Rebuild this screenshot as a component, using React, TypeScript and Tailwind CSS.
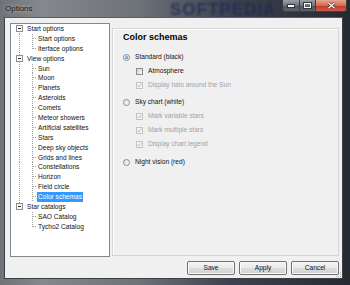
import React from "react";

type Row = {
  text: string;
  level: 0 | 1;
  first?: boolean;
  lastTop?: boolean;
  lastChild?: boolean;
  parentLast?: boolean;
  selected?: boolean;
};

const rows: Row[] = [
  { text: "Start options", level: 0, first: true },
  { text: "Start options", level: 1 },
  { text: "Iterface options", level: 1, lastChild: true },
  { text: "View options", level: 0 },
  { text: "Sun", level: 1 },
  { text: "Moon", level: 1 },
  { text: "Planets", level: 1 },
  { text: "Asteroids", level: 1 },
  { text: "Comets", level: 1 },
  { text: "Meteor showers", level: 1 },
  { text: "Artificial satellites", level: 1 },
  { text: "Stars", level: 1 },
  { text: "Deep sky objects", level: 1 },
  { text: "Grids and lines", level: 1 },
  { text: "Constellations", level: 1 },
  { text: "Horizon", level: 1 },
  { text: "Field circle", level: 1 },
  { text: "Color schemas", level: 1, selected: true },
  { text: "Star catalogs", level: 0, lastTop: true },
  { text: "SAO Catalog", level: 1, parentLast: true },
  { text: "Tycho2 Catalog", level: 1, parentLast: true, lastChild: true },
];

const H = 9.9;
const LINE = "#a0a0a0";

function Connector({ r }: { r: Row }) {
  const c = H / 2;
  if (r.level === 0) {
    const y1 = r.first ? c : 0;
    const y2 = r.lastTop ? c : H;
    return (
      <svg width={15} height={H} className="shrink-0" shapeRendering="crispEdges">
        <line x1={8.5} x2={8.5} y1={y1} y2={y2} stroke={LINE} strokeDasharray="1 1" />
        <rect x={5.5} y={Math.round(c) - 3.5} width={6} height={6} fill="#f7f7f7" stroke="#8f9094" />
        <line x1={7} x2={10} y1={Math.round(c) - 0.5} y2={Math.round(c) - 0.5} stroke="#333" />
      </svg>
    );
  }
  return (
    <svg width={26} height={H} className="shrink-0" shapeRendering="crispEdges">
      {!r.parentLast && (
        <line x1={8.5} x2={8.5} y1={0} y2={H} stroke={LINE} strokeDasharray="1 1" />
      )}
      <line x1={21.5} x2={21.5} y1={0} y2={r.lastChild ? c : H} stroke={LINE} strokeDasharray="1 1" />
      <line x1={22} x2={26} y1={Math.round(c) - 0.5} y2={Math.round(c) - 0.5} stroke={LINE} strokeDasharray="1 1" />
    </svg>
  );
}

function Radio({ checked }: { checked?: boolean }) {
  return (
    <div className="w-[7px] h-[7px] rounded-full border border-[#8a8d91] bg-[linear-gradient(135deg,#dedede,#fbfbfb)] flex items-center justify-center shrink-0">
      {checked && (
        <div className="w-[3px] h-[3px] rounded-full bg-[radial-gradient(circle_at_35%_35%,#9fd0ff,#1d64b8)]" />
      )}
    </div>
  );
}

function Check({ disabled, checked }: { disabled?: boolean; checked?: boolean }) {
  return (
    <div
      className={
        disabled
          ? "w-[7px] h-[7px] border border-[#c2c4c6] bg-[#f4f4f4] flex items-center justify-center shrink-0"
          : "w-[7px] h-[7px] border border-[#8a8d91] bg-[linear-gradient(135deg,#d4d4d4,#f7f7f7)] shrink-0"
      }
    >
      {checked && (
        <svg width={5} height={5} viewBox="0 0 5 5">
          <path d="M0.6 2.6 L1.9 3.9 L4.4 0.8" fill="none" stroke="#b0b0b0" strokeWidth={0.9} />
        </svg>
      )}
    </div>
  );
}

function Btn({ label }: { label: string }) {
  return (
    <div className="w-[48px] h-[14px] rounded-[2px] border border-[#707070] bg-[linear-gradient(to_bottom,#f3f3f3,#ebebeb_48%,#dddddd_52%,#cfcfcf)] shadow-[inset_0_0_0_1px_#fafafa] flex items-center justify-center text-[6.6px] text-[#111]">
      {label}
    </div>
  );
}

export default function App() {
  return (
    <div
      className="w-[350px] h-[285px] relative overflow-hidden flex flex-col bg-[linear-gradient(90deg,#6f7277_0%,#85888d_12%,#6d7178_40%,#3c4250_65%,#252932_100%)]"
      style={{ fontFamily: '"Liberation Sans", Arial, sans-serif' }}
    >
      {/* title bar */}
      <div className="h-[17px] flex items-start relative shrink-0">
        <div className="absolute left-[170px] top-[-3px] text-[17px] font-bold tracking-[1px] text-[#1d2c52] blur-[1.2px] opacity-80">
          SOFTPEDIA
        </div>
        <span className="relative pl-[5px] pt-[4px] text-[8px] leading-[9px] text-[#141414] [text-shadow:0_0_4px_rgba(255,255,255,0.7)]">
          Options
        </span>
        <div className="relative ml-auto mr-[3px] flex h-[12px] rounded-b-[3px] border border-t-0 border-[#3b3f46] overflow-hidden">
          <div className="w-[17px] h-full bg-[linear-gradient(to_bottom,#9aa0a8,#6d737c_50%,#4f555e_52%,#5c636c)] border-r border-[#3b3f46] flex items-end justify-center pb-[3px]">
            <div className="w-[6px] h-[2px] bg-white border border-[#333] box-content" />
          </div>
          <div className="w-[16px] h-full bg-[linear-gradient(to_bottom,#9aa0a8,#6d737c_50%,#4f555e_52%,#5c636c)] border-r border-[#3b3f46] flex items-center justify-center">
            <div className="w-[7px] h-[5px] border-[1.5px] border-white outline outline-[0.5px] outline-[#333]" />
          </div>
          <div className="w-[30px] h-full bg-[linear-gradient(to_bottom,#e8a493,#d26a55_50%,#c0392b_52%,#cf5b49)] flex items-center justify-center">
            <svg width={9} height={7} viewBox="0 0 9 7">
              <path d="M1.5 0.8 L7.5 6.2 M7.5 0.8 L1.5 6.2" stroke="#3a1b16" strokeWidth={2.6} />
              <path d="M1.5 0.8 L7.5 6.2 M7.5 0.8 L1.5 6.2" stroke="#ffffff" strokeWidth={1.5} />
            </svg>
          </div>
        </div>
      </div>

      {/* client */}
      <div className="ml-[4px] mr-[7px] h-[262px] border border-[#3c3f44] border-t-[#5a5d62] bg-[#f0f0f0] flex flex-col relative">
        <div className="flex pt-[5px] pl-[5px] pr-[3px] gap-[2px]">
          {/* tree */}
          <div className="w-[100px] h-[234px] bg-white border border-[#828790] flex flex-col text-[6.6px] text-[#111]">
            {rows.map((r, i) => (
              <div key={i} className="flex items-center" style={{ height: H }}>
                <Connector r={r} />
                <span
                  className={
                    r.selected
                      ? "px-[1px] h-full flex items-center bg-[#3399ff] text-white whitespace-nowrap"
                      : "px-[1px] whitespace-nowrap"
                  }
                >
                  {r.text}
                </span>
              </div>
            ))}
          </div>

          {/* options panel */}
          <div className="mt-[5px] w-[227px] h-[228px] border border-[#d5d5d5] shadow-[inset_1px_1px_0_#ffffff] pl-[10px] flex flex-col text-[6.6px] text-[#111]">
            <div className="mt-[3px] h-[11px] leading-[11px] text-[9px] font-bold text-black">Color schemas</div>
            <div className="mt-[9px] h-[10px] flex items-center gap-[5px]">
              <Radio checked />
              <span>Standard (black)</span>
            </div>
            <div className="mt-[4px] h-[10px] flex items-center gap-[5px] pl-[13px]">
              <Check />
              <span>Atmosphere</span>
            </div>
            <div className="mt-[4px] h-[10px] flex items-center gap-[5px] pl-[13px] text-[#a3a3a3]">
              <Check disabled checked />
              <span>Display halo around the Sun</span>
            </div>
            <div className="mt-[7px] h-[10px] flex items-center gap-[5px]">
              <Radio />
              <span>Sky chart (white)</span>
            </div>
            <div className="mt-[4px] h-[10px] flex items-center gap-[5px] pl-[13px] text-[#a3a3a3]">
              <Check disabled checked />
              <span>Mark variable stars</span>
            </div>
            <div className="mt-[4px] h-[10px] flex items-center gap-[5px] pl-[13px] text-[#a3a3a3]">
              <Check disabled checked />
              <span>Mark multiple stars</span>
            </div>
            <div className="mt-[4px] h-[10px] flex items-center gap-[5px] pl-[13px] text-[#a3a3a3]">
              <Check disabled checked />
              <span>Display chart legend</span>
            </div>
            <div className="mt-[8px] h-[10px] flex items-center gap-[5px]">
              <Radio />
              <span>Night vision (red)</span>
            </div>
          </div>
        </div>

        {/* buttons */}
        <div className="mt-[4px] flex justify-end gap-[4px] pr-[3px]">
          <Btn label="Save" />
          <Btn label="Apply" />
          <Btn label="Cancel" />
        </div>

        {/* grip */}
        <svg className="absolute right-[0px] bottom-[0px]" width={6} height={6} viewBox="0 0 6 6">
          <rect x={4} y={0} width={1} height={1} fill="#b0b0b0" />
          <rect x={2} y={2} width={1} height={1} fill="#b0b0b0" />
          <rect x={4} y={2} width={1} height={1} fill="#b0b0b0" />
          <rect x={0} y={4} width={1} height={1} fill="#b0b0b0" />
          <rect x={2} y={4} width={1} height={1} fill="#b0b0b0" />
          <rect x={4} y={4} width={1} height={1} fill="#b0b0b0" />
        </svg>
      </div>
    </div>
  );
}
